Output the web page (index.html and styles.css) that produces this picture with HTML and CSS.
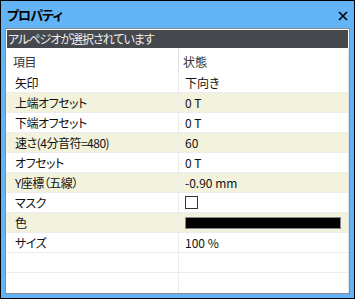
FILE: index.html
```html
<!DOCTYPE html>
<html lang="ja">
  <head>
    <meta charset="UTF-8" />
    <title>プロパティ</title>
    <link rel="stylesheet" href="styles.css">
  </head>
  <body>
    <div class="window">
      <!-- タイトルバー -->
      <div class="titlebar">
        <span class="title">プロパティ</span>
        <svg class="close" width="10" height="10" viewBox="0 0 10 10">
          <path d="M1 1 L9 9 M9 1 L1 9" stroke="#000" stroke-width="1.6" fill="none" />
        </svg>
      </div>

      <div class="panel">
        <div class="status">アルペジオが選択されています</div>
        <div class="grid">
          <div class="row head"><div class="cell">項目</div><div class="cell">状態</div></div>
          <div class="row"><div class="cell">矢印</div><div class="cell">下向き</div></div>
          <div class="row alt"><div class="cell">上端オフセット</div><div class="cell">0 T</div></div>
          <div class="row"><div class="cell">下端オフセット</div><div class="cell">0 T</div></div>
          <div class="row alt"><div class="cell">速さ(4分音符=480)</div><div class="cell">60</div></div>
          <div class="row"><div class="cell">オフセット</div><div class="cell">0 T</div></div>
          <div class="row alt"><div class="cell">Y座標（五線）</div><div class="cell">-0.90 mm</div></div>
          <div class="row"><div class="cell">マスク</div><div class="cell"><span class="check"></span></div></div>
          <div class="row alt"><div class="cell">色</div><div class="cell"><span class="swatch"></span></div></div>
          <div class="row"><div class="cell">サイズ</div><div class="cell">100 %</div></div>
          <div class="row"><div class="cell"></div><div class="cell"></div></div>
          <div class="row last"><div class="cell"></div><div class="cell"></div></div>
        </div>
      </div>
    </div>
  </body>
</html>
```

FILE: styles.css
```css
* {
  box-sizing: border-box;
}

body {
  margin: 0;
  font-family: "Noto Sans CJK JP", "Noto Sans", sans-serif;
  font-size: 12px;
  font-feature-settings: "palt";
}

.window {
  width: 355px;
  height: 299px;
  background: #62b4f6;
  border: 1px solid #000;
  display: flex;
  flex-direction: column;
}

/* ───── タイトルバー ───── */
.titlebar {
  height: 27px;
  display: flex;
  align-items: center;
  justify-content: space-between;
  padding: 0 6px 0 6px;
}

.title {
  font-weight: 700;
  font-size: 13px;
  letter-spacing: -1px;
  color: #000;
}

.close { margin-top: 2px; }

/* ───── パネル ───── */
.panel {
  margin: 0 4px;
  height: 266px;
  border: 1px solid #8c8c8c;
  background: #fff;
  display: flex;
  flex-direction: column;
}

.status {
  height: 20px;
  background: #45494e;
  border: 1px solid #fff;
  color: #f0f0f0;
  line-height: 17px;
  padding-left: 1px;
  letter-spacing: -1px;
  white-space: nowrap;
}

.grid {
  flex: 1;
  border-right: 1px solid #e4e4e4;
}

.row {
  display: grid;
  grid-template-columns: 173px 1fr;
  height: 20px;
  border-bottom: 1px solid #ececec;
}

.row.alt { background: #f3f3dd; }
.row.last { border-bottom: none; }

.cell {
  display: flex;
  align-items: center;
  padding-left: 6px;
  color: #111;
  white-space: nowrap;
}

.cell:first-child {
  padding-left: 9px;
  letter-spacing: -0.5px;
  border-right: 1px solid #ececec;
}

.row.head {
  height: 24px;
  border-bottom: none;
}

.row.head .cell {
  padding-left: 4px;
  color: #333;
}

.row.head .cell:first-child {
  padding-left: 7px;
  border-right-color: #e0e0e0;
}

.check {
  width: 13px;
  height: 13px;
  border: 1px solid #333;
  background: #fff;
}

.swatch {
  width: 156px;
  height: 12px;
  background: #000;
  border: 1px solid #888;
}
```
